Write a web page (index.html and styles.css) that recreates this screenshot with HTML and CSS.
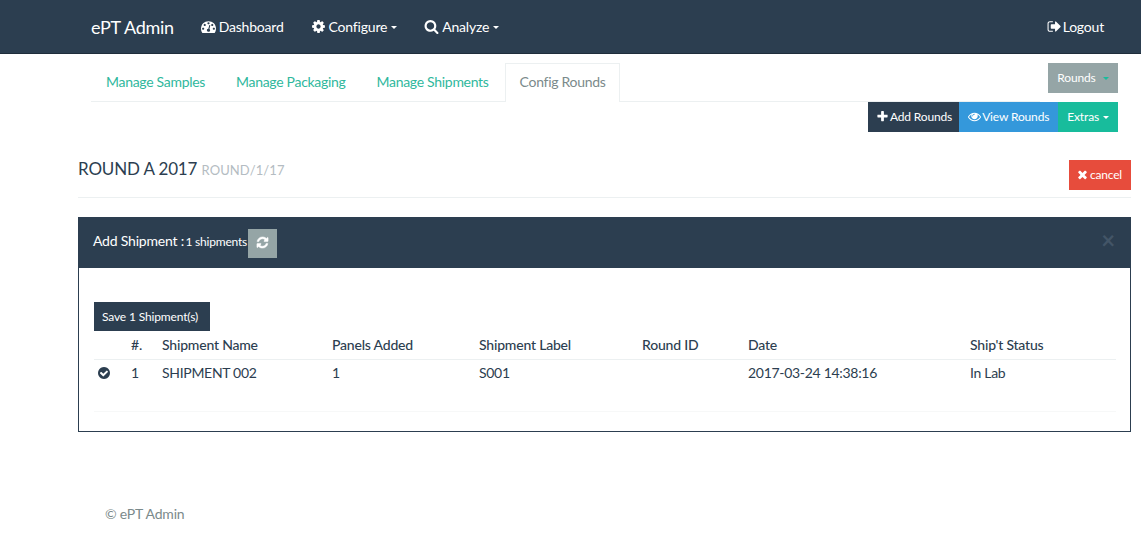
FILE: index.html
```html
<!DOCTYPE html>
<html>
<head>
	<title>ePT Admin</title>
	<link rel="stylesheet" href="styles.css">
</head>
<body>
<svg class="icon-defs" xmlns="http://www.w3.org/2000/svg">
  <symbol id="i-dash" viewBox="0 0 1792 1792"><path d="M384 1152q0-53-37.5-90.5t-90.5-37.5-90.5 37.5-37.5 90.5 37.5 90.5 90.5 37.5 90.5-37.5 37.5-90.5zm192-448q0-53-37.5-90.5t-90.5-37.5-90.5 37.5-37.5 90.5 37.5 90.5 90.5 37.5 90.5-37.5 37.5-90.5zm428 481l101-382q6-26-7.5-48.5t-38.5-29.5-48 6.5-30 39.5l-101 382q-60 5-107 43.5t-63 98.5q-20 77 20 146t117 89 146-20 89-117q16-60-6-117t-72-91zm660-33q0-53-37.5-90.5t-90.5-37.5-90.5 37.5-37.5 90.5 37.5 90.5 90.5 37.5 90.5-37.5 37.5-90.5zm-640-640q0-53-37.5-90.5t-90.5-37.5-90.5 37.5-37.5 90.5 37.5 90.5 90.5 37.5 90.5-37.5 37.5-90.5zm448 192q0-53-37.5-90.5t-90.5-37.5-90.5 37.5-37.5 90.5 37.5 90.5 90.5 37.5 90.5-37.5 37.5-90.5zm320 448q0 261-141 483-19 29-54 29h-1402q-35 0-54-29-141-221-141-483 0-182 71-348t191-286 286-191 348-71 348 71 286 191 191 286 71 348z"/></symbol>
  <symbol id="i-cog" viewBox="0 0 1792 1792"><path d="M1152 896q0-106-75-181t-181-75-181 75-75 181 75 181 181 75 181-75 75-181zm512-109v222q0 12-8 23t-20 13l-185 28q-19 54-39 91 35 50 107 138 10 12 10 25t-9 23q-27 37-99 108t-94 71q-12 0-26-9l-138-108q-44 23-91 38-16 136-29 186-7 28-36 28h-222q-14 0-24.5-8.5t-11.5-21.5l-28-184q-49-16-90-37l-141 107q-10 9-25 9-14 0-25-11-126-114-165-168-7-10-7-23 0-12 8-23 15-21 51-66.5t54-70.5q-27-50-41-99l-183-27q-13-2-21-12.5t-8-23.5v-222q0-12 8-23t19-13l186-28q14-46 39-92-40-57-107-138-10-12-10-24 0-10 9-23 26-36 98.5-107.5t94.5-71.5q13 0 26 10l138 107q44-23 91-38 16-136 29-186 7-28 36-28h222q14 0 24.5 8.5t11.5 21.5l28 184q49 16 90 37l142-107q9-9 24-9 13 0 25 10 129 119 165 170 7 8 7 22 0 12-8 23-15 21-51 66.5t-54 70.5q26 50 41 98l183 28q13 2 21 12.5t8 23.5z"/></symbol>
  <symbol id="i-search" viewBox="0 0 1792 1792"><path d="M1216 832q0-185-131.5-316.5t-316.5-131.5-316.5 131.5-131.5 316.5 131.5 316.5 316.5 131.5 316.5-131.5 131.5-316.5zm512 832q0 52-38 90t-90 38q-54 0-90-38l-343-342q-179 124-399 124-143 0-273.5-55.5t-225-150-150-225-55.5-273.5 55.5-273.5 150-225 225-150 273.5-55.5 273.5 55.5 225 150 150 225 55.5 273.5q0 220-124 399l343 343q37 37 37 90z"/></symbol>
  <symbol id="i-out" viewBox="0 0 1792 1792"><path d="M704 1440q0 4 1 20t.5 26.5-3 23.5-10 19.5-20.5 6.5h-320q-119 0-203.5-84.5t-84.5-203.5v-704q0-119 84.5-203.5t203.5-84.5h320q13 0 22.5 9.5t9.5 22.5q0 4 1 20t.5 26.5-3 23.5-10 19.5-20.5 6.5h-320q-66 0-113 47t-47 113v704q0 66 47 113t113 47h312l11.5 1 11.5 3 8 5.5 7 9 2 13.5zm928-544q0 26-19 45l-544 544q-19 19-45 19t-45-19-19-45v-288h-448q-26 0-45-19t-19-45v-384q0-26 19-45t45-19h448v-288q0-26 19-45t45-19 45 19l544 544q19 19 19 45z"/></symbol>
  <symbol id="i-plus" viewBox="0 0 1792 1792"><path d="M1600 736v192q0 40-28 68t-68 28h-416v416q0 40-28 68t-68 28h-192q-40 0-68-28t-28-68v-416h-416q-40 0-68-28t-28-68v-192q0-40 28-68t68-28h416v-416q0-40 28-68t68-28h192q40 0 68 28t28 68v416h416q40 0 68 28t28 68z"/></symbol>
  <symbol id="i-eye" viewBox="0 0 1792 1792"><path d="M1664 960q-152-236-381-353 61 104 61 225 0 185-131.5 316.5t-316.5 131.5-316.5-131.5-131.5-316.5q0-121 61-225-229 117-381 353 133 205 333.5 326.5t434.5 121.5 434.5-121.5 333.5-326.5zm-720-384q0-20-14-34t-34-14q-125 0-214.5 89.5t-89.5 214.5q0 20 14 34t34 14 34-14 14-34q0-86 61-147t147-61q20 0 34-14t14-34zm848 384q0 34-20 69-140 230-376.5 368.5t-499.5 138.5-499.5-139-376.5-368q-20-35-20-69t20-69q140-229 376.5-368t499.5-139 499.5 139 376.5 368q20 35 20 69z"/></symbol>
  <symbol id="i-times" viewBox="0 0 1792 1792"><path d="M1490 1322q0 40-28 68l-136 136q-28 28-68 28t-68-28l-294-294-294 294q-28 28-68 28t-68-28l-136-136q-28-28-28-68t28-68l294-294-294-294q-28-28-28-68t28-68l136-136q28-28 68-28t68 28l294 294 294-294q28-28 68-28t68 28l136 136q28 28 28 68t-28 68l-294 294 294 294q28 28 28 68z"/></symbol>
  <symbol id="i-refresh" viewBox="0 0 1792 1792"><path d="M1639 1056q0 5-1 7-64 268-268 434.5t-478 166.5q-146 0-282.5-55t-243.5-157l-129 129q-19 19-45 19t-45-19-19-45v-448q0-26 19-45t45-19h448q26 0 45 19t19 45-19 45l-137 137q71 66 161 102t187 36q134 0 250-65t186-179q11-17 53-117 8-23 30-23h192q13 0 22.5 9.5t9.5 22.5zm25-800v448q0 26-19 45t-45 19h-448q-26 0-45-19t-19-45 19-45l138-138q-148-137-349-137-134 0-250 65t-186 179q-11 17-53 117-8 23-30 23h-199q-13 0-22.5-9.5t-9.5-22.5v-7q65-268 270-434.5t480-166.5q146 0 284 55.5t245 156.5l130-129q19-19 45-19t45 19 19 45z"/></symbol>
  <symbol id="i-check" viewBox="0 0 1792 1792"><path d="M1412 734q0-28-18-46l-91-90q-19-19-45-19t-45 19l-408 407-226-226q-19-19-45-19t-45 19l-91 90q-18 18-18 46 0 27 18 45l362 362q19 19 45 19 27 0 46-19l543-543q18-18 18-45zm252 162q0 209-103 385.5t-279.5 279.5-385.5 103-385.5-103-279.5-279.5-103-385.5 103-385.5 279.5-279.5 385.5-103 385.5 103 279.5 279.5 103 385.5z"/></symbol>
</svg>

<nav class="navbar">
  <a class="brand">ePT Admin</a>
  <a class="nav-link"><svg class="icon"><use href="#i-dash"/></svg>Dashboard</a>
  <a class="nav-link"><svg class="icon"><use href="#i-cog"/></svg>Configure<span class="caret"></span></a>
  <a class="nav-link"><svg class="icon"><use href="#i-search"/></svg>Analyze<span class="caret"></span></a>
  <a class="nav-link nav-right"><svg class="icon"><use href="#i-out"/></svg>Logout</a>
</nav>

<div class="tabs-row">
  <ul class="tabs">
    <li><a>Manage Samples</a></li>
    <li><a>Manage Packaging</a></li>
    <li><a>Manage Shipments</a></li>
    <li class="active"><a>Config Rounds</a></li>
  </ul>
  <button class="btn btn-grey btn-rounds">Rounds<span class="caret caret-green"></span></button>
</div>

<div class="actions">
  <button class="btn btn-navy btn-add"><svg class="icon"><use href="#i-plus"/></svg>Add Rounds</button>
  <button class="btn btn-blue"><svg class="icon"><use href="#i-eye"/></svg>View Rounds</button>
  <button class="btn btn-green">Extras<span class="caret"></span></button>
</div>

<main class="content">
  <div class="title-row">
    <h3>ROUND A 2017 <small>ROUND/1/17</small></h3>
    <button class="btn btn-red"><svg class="icon"><use href="#i-times"/></svg>cancel</button>
  </div>

  <section class="panel">
    <div class="panel-head">
      <span class="panel-title">Add Shipment : <small>1 shipments</small></span>
      <button class="btn btn-grey btn-refresh"><svg class="icon"><use href="#i-refresh"/></svg></button>
      <span class="panel-close">×</span>
    </div>
    <div class="panel-body">
      <button class="btn btn-navy btn-save">Save 1 Shipment(s)</button>
      <table>
        <colgroup>
          <col class="c-check"><col class="c-num"><col class="c-name"><col class="c-panels">
          <col class="c-label"><col class="c-round"><col class="c-date"><col class="c-status">
        </colgroup>
        <thead>
          <tr><th></th><th>#.</th><th>Shipment Name</th><th>Panels Added</th><th>Shipment Label</th><th>Round ID</th><th>Date</th><th>Ship't Status</th></tr>
        </thead>
        <tbody>
          <tr>
            <td><svg class="icon check"><use href="#i-check"/></svg></td>
            <td>1</td><td>SHIPMENT 002</td><td>1</td><td>S001</td><td></td><td>2017-03-24 14:38:16</td><td>In Lab</td>
          </tr>
        </tbody>
      </table>
    </div>
  </section>
</main>

<footer class="footer">© ePT Admin</footer>
</body>
</html>
```

FILE: styles.css
```css
html, body {
  margin: 0;
}

body {
  background-color: white;
  color: #2c3e50;
  font-family: 'Lato', sans-serif;
  font-size: 14px;
  line-height: 20px;
  letter-spacing: -0.2px;
}

.icon-defs {
  display: none;
}

.icon {
  width: 14px;
  height: 14px;
  fill: currentColor;
  vertical-align: -2px;
  margin-right: 4px;
}

.caret {
  display: inline-block;
  margin-left: 4px;
  vertical-align: middle;
  border-top: 3px solid currentColor;
  border-left: 3px solid transparent;
  border-right: 3px solid transparent;
}

.caret-green {
  margin-left: 7px;
  color: #18bc9c;
}

/* top bar */
.navbar {
  display: flex;
  align-items: center;
  height: 53px;
  padding: 0 37px 0 91px;
  background-color: #2c3e50;
  border-bottom: 1px solid #1f2d3b;
  color: white;
}

.brand {
  font-size: 18px;
  letter-spacing: -0.3px;
  margin-right: 27px;
}

.nav-link {
  margin-right: 27px;
}

.nav-link .icon {
  width: 15px;
  height: 15px;
  margin-right: 3px;
}

.nav-right {
  margin-left: auto;
  margin-right: 0;
}

.nav-right .icon {
  margin-right: 1px;
}

/* tabs */
.tabs-row {
  display: flex;
  align-items: flex-start;
  padding: 9px 23px 0 91px;
}

.tabs {
  display: flex;
  flex: 1;
  height: 38px;
  margin: 0 8px 0 0;
  padding: 0;
  list-style: none;
  border-bottom: 1px solid #ecf0f1;
}

.tabs li a {
  display: block;
  padding: 8px 15px 8px 14px;
  color: #30b89d;
  letter-spacing: -0.3px;
  border: 1px solid transparent;
  border-bottom: none;
}

.tabs li.active a {
  height: 39px;
  box-sizing: border-box;
  padding-right: 14px;
  color: #7b8a8b;
  background-color: white;
  border-color: #ecf0f1;
}

.btn {
  display: inline-block;
  border: none;
  color: white;
  font-family: 'Lato', sans-serif;
  font-size: 12px;
  line-height: 18px;
  letter-spacing: -0.15px;
  padding: 6px 9px;
}

.btn .icon {
  width: 13px;
  height: 13px;
  margin-right: 1px;
}

.btn-rounds {
  width: 70px;
  height: 30px;
  white-space: nowrap;
}

.btn-add {
  padding: 6px 7px 6px 8px;
}

.btn-grey {
  background-color: #95a5a6;
}

.btn-navy {
  background-color: #2c3e50;
}

.btn-blue {
  background-color: #3498db;
}

.btn-green {
  background-color: #18bc9c;
}

.btn-red {
  height: 30px;
  padding-left: 7px;
  letter-spacing: -0.2px;
  background-color: #e74c3c;
}

.actions {
  display: flex;
  justify-content: flex-end;
  height: 30px;
  padding-right: 23px;
}

/* page content */
.content {
  margin: 0 10px 0 78px;
}

.title-row {
  display: flex;
  justify-content: space-between;
  align-items: flex-start;
  height: 37px;
  margin-top: 28px;
  margin-bottom: 19px;
  border-bottom: 1px solid #ecf0f1;
}

h3 {
  margin: 0;
  font-size: 17px;
  font-weight: normal;
  line-height: 17px;
  letter-spacing: -0.15px;
}

h3 small {
  color: #b4bcc2;
  font-size: 13px;
  letter-spacing: 0.1px;
}

.panel {
  border: 1px solid #2c3e50;
}

.panel-head {
  display: flex;
  align-items: center;
  height: 50px;
  padding: 0 15px 0 14px;
  background-color: #2c3e50;
  color: white;
}

.panel-title {
  margin-right: 1px;
  margin-bottom: 4px;
}

.panel-title small {
  margin-left: -2px;
  font-size: 12px;
}

.btn-refresh {
  width: 29px;
  height: 29px;
  padding: 0;
}

.btn-refresh .icon {
  margin: 0;
  stroke: currentColor;
  stroke-width: 70;
}

.panel-close {
  margin: 0 0 6px auto;
  color: #435567;
  font-size: 24px;
  font-weight: bold;
}

.panel-body {
  height: 163px;
  box-sizing: border-box;
  padding: 34px 15px 0;
}

.btn-save {
  height: 29px;
  display: block;
  padding: 6px 12px 6px 8px;
}

table {
  width: 1022px;
  table-layout: fixed;
  border-collapse: collapse;
  border-bottom: 1px solid #f7f8f8;
}

.c-check { width: 29px; }
.c-num { width: 31px; }
.c-name { width: 170px; }
.c-panels { width: 147px; }
.c-label { width: 163px; }
.c-round { width: 106px; }
.c-date { width: 222px; }
.c-status { width: 154px; }

th, td {
  padding: 0 8px;
  text-align: left;
}

th {
  height: 28px;
  font-weight: 500;
  border-bottom: 1px solid #ecf0f1;
}

td {
  height: 52px;
  padding-bottom: 28px;
  box-sizing: border-box;
  vertical-align: bottom;
  letter-spacing: -0.3px;
}

.check {
  margin-left: -5px;
}

.footer {
  padding: 72px 0 0 105px;
  color: #7b8a8b;
}
```
